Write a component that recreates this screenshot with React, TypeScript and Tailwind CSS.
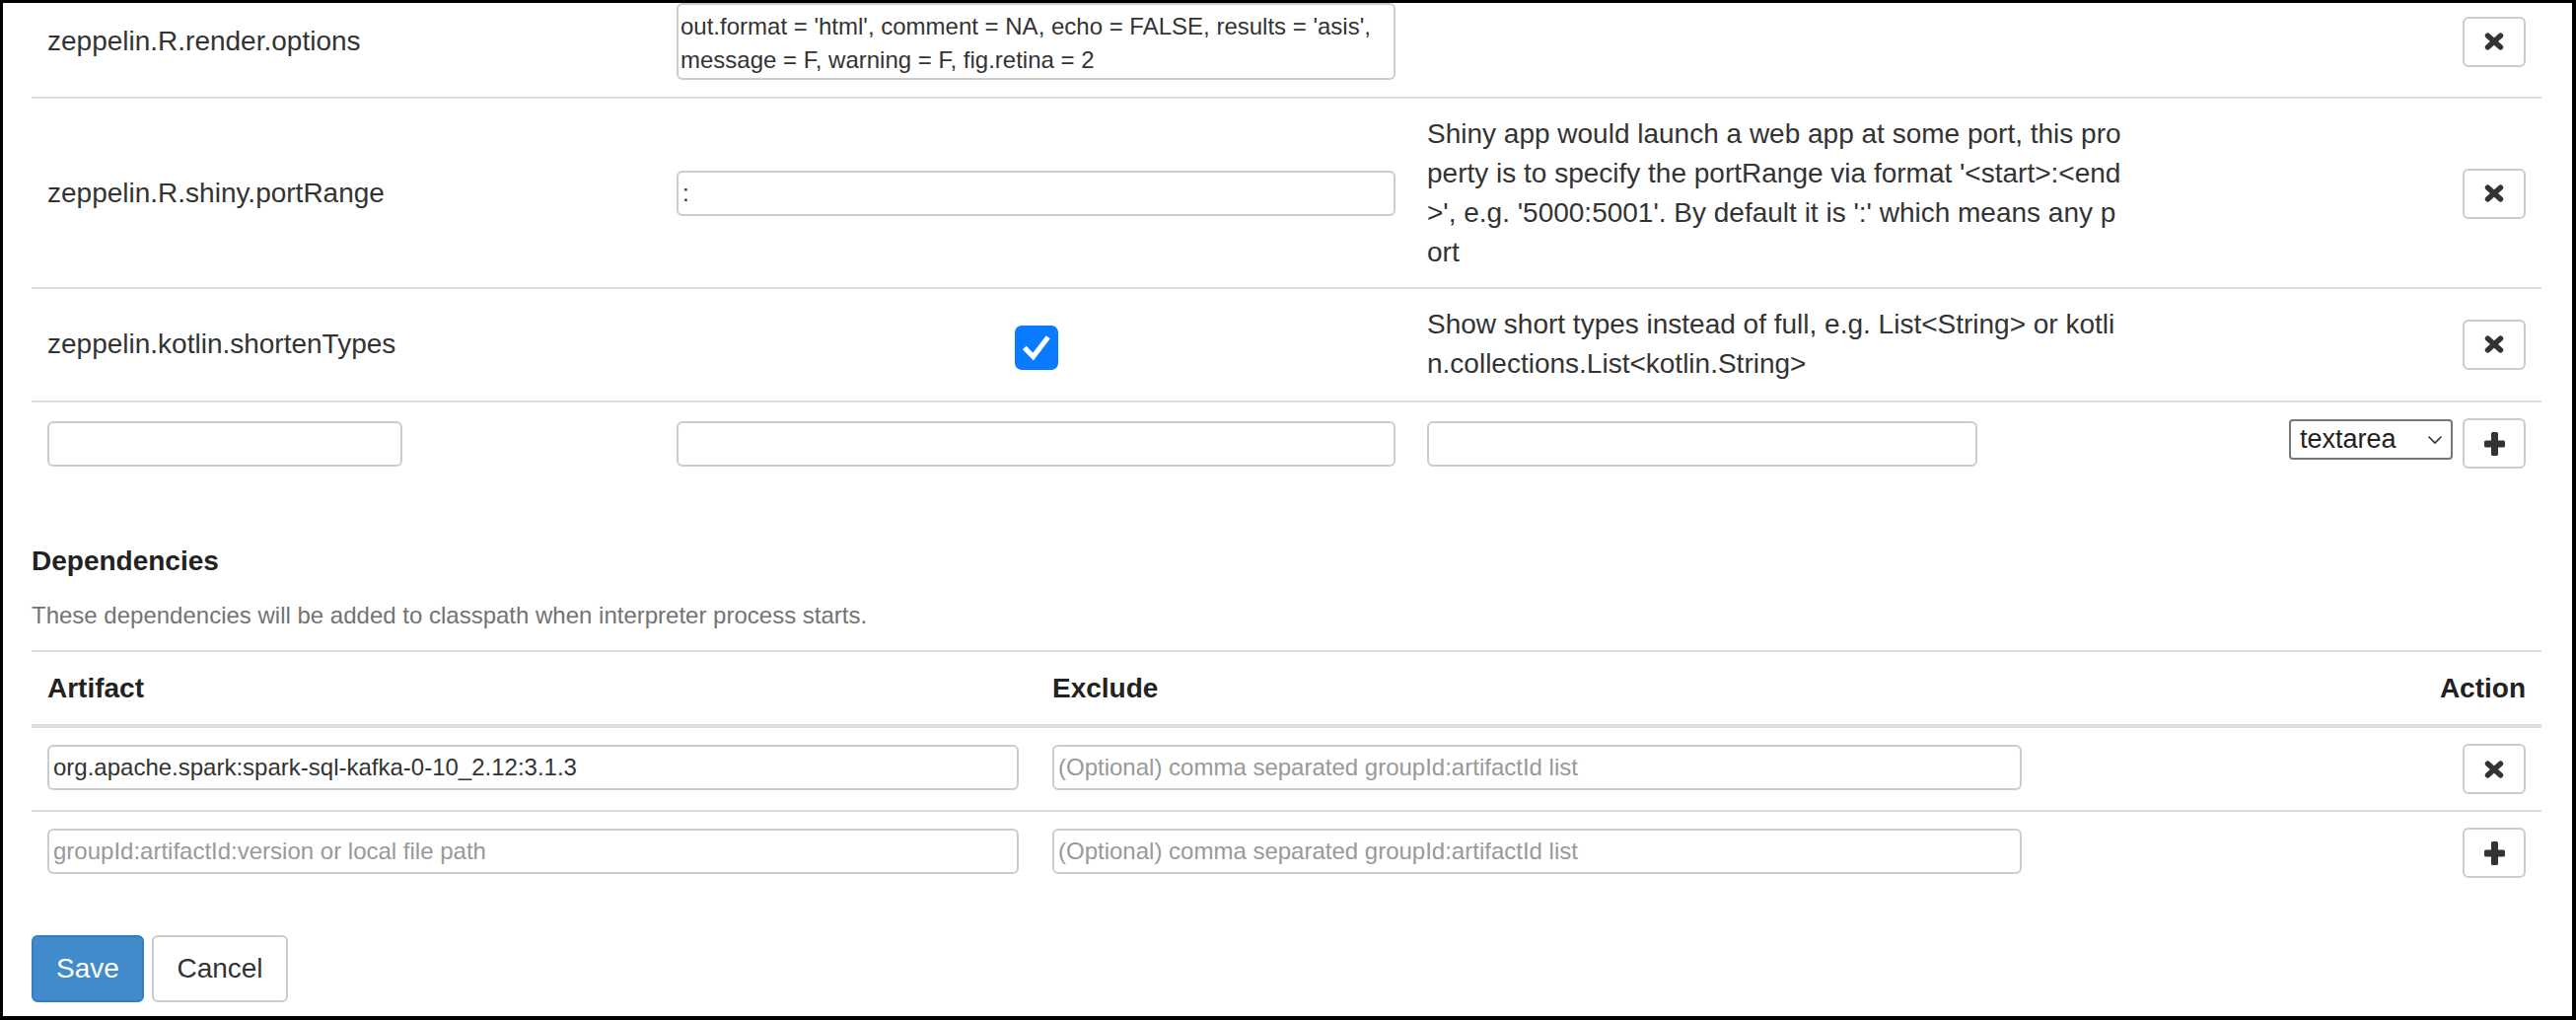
import React from "react";

const XIcon = () => (
  <svg width="20" height="18" viewBox="0 0 20 18">
    <path d="M3.6 3.2 L16.4 14.8 M16.4 3.2 L3.6 14.8" stroke="#333" strokeWidth="5.6" strokeLinecap="round" />
  </svg>
);

const PlusIcon = () => (
  <svg width="21" height="24" viewBox="0 0 21 24">
    <rect x="7" y="0" width="7" height="24" rx="1.6" fill="#333" />
    <rect x="0" y="8.5" width="21" height="7" rx="1.6" fill="#333" />
  </svg>
);

const IconBtn = ({ plus }: { plus?: boolean }) => (
  <button className="w-[64px] h-[51px] border-2 border-[#ccc] rounded-[6px] bg-white flex items-center justify-center shrink-0">
    {plus ? <PlusIcon /> : <XIcon />}
  </button>
);

const Input = ({ value, placeholder, w }: { value?: string; placeholder?: string; w: string }) => (
  <div
    className={`${w} h-[46px] border-2 border-[#ccc] rounded-[6px] bg-white flex items-center pl-[4px] text-[24px] leading-[34px] whitespace-nowrap overflow-hidden`}
  >
    {value ? <span className="text-[#333]">{value}</span> : <span className="text-[#999]">{placeholder}</span>}
  </div>
);

export default function App() {
  return (
    <div className="w-[2612px] h-[1034px] overflow-hidden bg-white border-t-[3px] border-l-[3px] border-r-[4px] border-b-[4px] border-black font-['Liberation_Sans',Arial,sans-serif] text-[#333] box-border">
      <div className="pl-[29px] pr-[31px]">
        {/* Row 1 */}
        <div className="grid grid-cols-[638px_761px_825px_1fr] items-center border-b-2 border-[#ddd] pb-[17px]">
          <div className="px-4 text-[28px] leading-[40px]">zeppelin.R.render.options</div>
          <div className="px-4">
            <div className="h-[78px] border-2 border-[#ccc] rounded-[6px] pt-[5px] pl-[2px] text-[24px] leading-[34px] whitespace-nowrap overflow-hidden text-[#333]">
              out.format = 'html', comment = NA, echo = FALSE, results = 'asis',
              <br />
              message = F, warning = F, fig.retina = 2
            </div>
          </div>
          <div className="px-4" />
          <div className="px-4 flex justify-end">
            <IconBtn />
          </div>
        </div>

        {/* Row 2 */}
        <div className="grid grid-cols-[638px_761px_825px_1fr] items-center border-b-2 border-[#ddd] pt-[16px] pb-[15px]">
          <div className="px-4 text-[28px] leading-[40px]">zeppelin.R.shiny.portRange</div>
          <div className="px-4">
            <Input value=":" w="w-full" />
          </div>
          <div className="px-4 text-[28px] leading-[40px] whitespace-nowrap">
            Shiny app would launch a web app at some port, this pro
            <br />
            perty is to specify the portRange via format '&lt;start&gt;:&lt;end
            <br />
            &gt;', e.g. '5000:5001'. By default it is ':' which means any p
            <br />
            ort
          </div>
          <div className="px-4 flex justify-end">
            <IconBtn />
          </div>
        </div>

        {/* Row 3 */}
        <div className="grid grid-cols-[638px_761px_825px_1fr] items-center border-b-2 border-[#ddd] pt-[16px] pb-[17px]">
          <div className="px-4 text-[28px] leading-[40px]">zeppelin.kotlin.shortenTypes</div>
          <div className="px-4 flex justify-center">
            <span className="w-[44px] h-[45px] mt-[6px] rounded-[7px] bg-[#0a7aff] flex items-center justify-center">
              <svg width="34" height="34" viewBox="0 0 24 24">
                <path d="M4.6 13.6 L9.6 18.8 L19.2 6.2" stroke="#fff" strokeWidth="3.6" fill="none" strokeLinecap="square" />
              </svg>
            </span>
          </div>
          <div className="px-4 text-[28px] leading-[40px] whitespace-nowrap">
            Show short types instead of full, e.g. List&lt;String&gt; or kotli
            <br />
            n.collections.List&lt;kotlin.String&gt;
          </div>
          <div className="px-4 flex justify-end">
            <IconBtn />
          </div>
        </div>

        {/* Add row */}
        <div className="grid grid-cols-[638px_761px_825px_1fr] items-center pt-[16px] pb-[16px]">
          <div className="px-4">
            <Input w="w-[360px]" />
          </div>
          <div className="px-4">
            <Input w="w-full" />
          </div>
          <div className="px-4">
            <Input w="w-[558px]" />
          </div>
          <div className="px-4 flex justify-end items-start gap-[10px]">
            <div className="w-[166px] h-[41px] mt-[1px] border-2 border-[#767676] rounded-[4px] flex items-center justify-between pl-[9px] pr-[8px] text-[27px] text-[#222]">
              <span>textarea</span>
              <svg width="16" height="10" viewBox="0 0 16 10">
                <path d="M1.5 1.5 L8 8 L14.5 1.5" stroke="#333" strokeWidth="1.6" fill="none" />
              </svg>
            </div>
            <IconBtn plus />
          </div>
        </div>

        {/* Dependencies */}
        <div className="mt-[58px] text-[28px] leading-[40px] font-bold text-[#222]">Dependencies</div>
        <div className="mt-[18px] text-[24px] leading-[34px] text-[#737373]">
          These dependencies will be added to classpath when interpreter process starts.
        </div>

        <div className="mt-[18px] border-t-2 border-[#ddd]">
          <div className="grid grid-cols-[1019px_1018px_1fr] items-center border-b-4 border-[#ddd] pt-[17px] pb-[16px] text-[28px] leading-[40px] font-bold text-[#222]">
            <div className="px-4">Artifact</div>
            <div className="px-4">Exclude</div>
            <div className="px-4 text-right">Action</div>
          </div>
          <div className="grid grid-cols-[1019px_1018px_1fr] items-start border-b-2 border-[#ddd] pt-[16px] pb-[16px]">
            <div className="px-4 pt-px">
              <Input value="org.apache.spark:spark-sql-kafka-0-10_2.12:3.1.3" w="w-[985px]" />
            </div>
            <div className="px-4 pt-px">
              <Input placeholder="(Optional) comma separated groupId:artifactId list" w="w-[983px]" />
            </div>
            <div className="px-4 flex justify-end">
              <IconBtn />
            </div>
          </div>
          <div className="grid grid-cols-[1019px_1018px_1fr] items-start pt-[16px] pb-[16px]">
            <div className="px-4 pt-px">
              <Input placeholder="groupId:artifactId:version or local file path" w="w-[985px]" />
            </div>
            <div className="px-4 pt-px">
              <Input placeholder="(Optional) comma separated groupId:artifactId list" w="w-[983px]" />
            </div>
            <div className="px-4 flex justify-end">
              <IconBtn plus />
            </div>
          </div>
        </div>

        <div className="mt-[42px] flex gap-[8px]">
          <button className="w-[114px] h-[68px] rounded-[6px] bg-[#428bca] border-2 border-[#357ebd] text-white text-[28px] leading-[40px]">
            Save
          </button>
          <button className="w-[138px] h-[68px] rounded-[6px] bg-white border-2 border-[#ccc] text-[#333] text-[28px] leading-[40px]">
            Cancel
          </button>
        </div>
      </div>
    </div>
  );
}
